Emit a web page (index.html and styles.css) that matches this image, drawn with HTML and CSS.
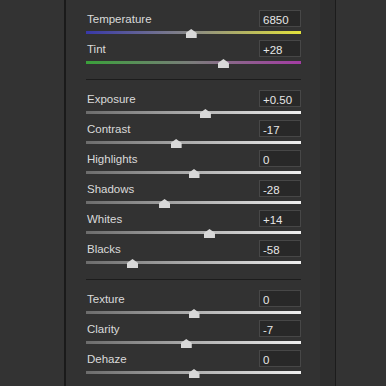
FILE: index.html
```html
<!DOCTYPE html>
<html>
<head>
<meta charset="utf-8">
<link rel="stylesheet" href="styles.css">
</head>
<body>
<div class="screen">
  <div class="side"></div>
  <div class="panel">
    <div class="section">
      <div class="row">
        <div class="head"><span class="label">Temperature</span><span class="value">6850</span></div>
        <div class="slider"><div class="track temp"></div><div class="thumb" style="left:48.7%"></div></div>
      </div>
      <div class="row">
        <div class="head"><span class="label">Tint</span><span class="value">+28</span></div>
        <div class="slider"><div class="track tint"></div><div class="thumb" style="left:63.7%"></div></div>
      </div>
    </div>
    <div class="divider"></div>
    <div class="section">
      <div class="row">
        <div class="head"><span class="label">Exposure</span><span class="value">+0.50</span></div>
        <div class="slider"><div class="track"></div><div class="thumb" style="left:55.3%"></div></div>
      </div>
      <div class="row">
        <div class="head"><span class="label">Contrast</span><span class="value">-17</span></div>
        <div class="slider"><div class="track"></div><div class="thumb" style="left:41.7%"></div></div>
      </div>
      <div class="row">
        <div class="head"><span class="label">Highlights</span><span class="value">0</span></div>
        <div class="slider"><div class="track"></div><div class="thumb" style="left:50%"></div></div>
      </div>
      <div class="row">
        <div class="head"><span class="label">Shadows</span><span class="value">-28</span></div>
        <div class="slider"><div class="track"></div><div class="thumb" style="left:36.3%"></div></div>
      </div>
      <div class="row">
        <div class="head"><span class="label">Whites</span><span class="value">+14</span></div>
        <div class="slider"><div class="track"></div><div class="thumb" style="left:57.2%"></div></div>
      </div>
      <div class="row">
        <div class="head"><span class="label">Blacks</span><span class="value">-58</span></div>
        <div class="slider"><div class="track"></div><div class="thumb" style="left:21.4%"></div></div>
      </div>
    </div>
    <div class="divider"></div>
    <div class="section">
      <div class="row">
        <div class="head"><span class="label">Texture</span><span class="value">0</span></div>
        <div class="slider"><div class="track"></div><div class="thumb" style="left:50%"></div></div>
      </div>
      <div class="row">
        <div class="head"><span class="label">Clarity</span><span class="value">-7</span></div>
        <div class="slider"><div class="track"></div><div class="thumb" style="left:46.4%"></div></div>
      </div>
      <div class="row">
        <div class="head"><span class="label">Dehaze</span><span class="value">0</span></div>
        <div class="slider"><div class="track"></div><div class="thumb" style="left:50%"></div></div>
      </div>
    </div>
  </div>
  <div class="scroll"></div>
  <div class="side right"></div>
</div>
</body>
</html>
```

FILE: styles.css
```css
html, body {
  margin: 0;
  padding: 0;
  background: #333333;
  overflow: hidden;
}
.screen {
  display: flex;
  width: 386px;
  height: 386px;
  font-family: "Liberation Sans", Arial, sans-serif;
  font-size: 11.5px;
}
.side {
  width: 64px;
  flex: none;
  background: #333333;
}
.side.right {
  flex: 1;
}
.panel {
  flex: none;
  background: #323232;
  border-left: 2px solid #1a1a1a;
  padding: 0 19px 0 20px;
  box-sizing: content-box;
  width: 215px;
}
.scroll {
  width: 15px;
  flex: none;
  background: #2e2e2e;
  border-right: 1px solid #1c1c1c;
}
.section {
  padding-top: 10px;
}
.row {
  height: 30px;
}
.head {
  display: flex;
  justify-content: space-between;
  align-items: flex-end;
  height: 17px;
}
.label {
  color: #dadada;
  line-height: 13px;
  padding-bottom: 1px;
  padding-left: 1px;
}
.value {
  box-sizing: border-box;
  width: 42px;
  height: 17px;
  border: 1px solid #474747;
  background: #282828;
  color: #e6e6e6;
  line-height: 13px;
  padding: 3px 0 0 3px;
}
.slider {
  position: relative;
  height: 13px;
}
.track {
  position: absolute;
  left: 0;
  right: 0;
  top: 4px;
  height: 3px;
  background: linear-gradient(to right, #6c6c6c, #f0f0f0);
}
.track.temp {
  background: linear-gradient(to right, #3838a8, #8a8a84 50%, #e2e23c);
}
.track.tint {
  background: linear-gradient(to right, #3aa03a, #7c7c7c 50%, #a43ca4);
}
.thumb {
  position: absolute;
  top: 2px;
  width: 11px;
  height: 9px;
  margin-left: -5px;
  background: #d8d8d8;
  clip-path: polygon(50% 0, 100% 45%, 100% 100%, 0 100%, 0 45%);
}
.divider {
  height: 1px;
  background: #1c1c1c;
  margin-top: 9px;
}
```
